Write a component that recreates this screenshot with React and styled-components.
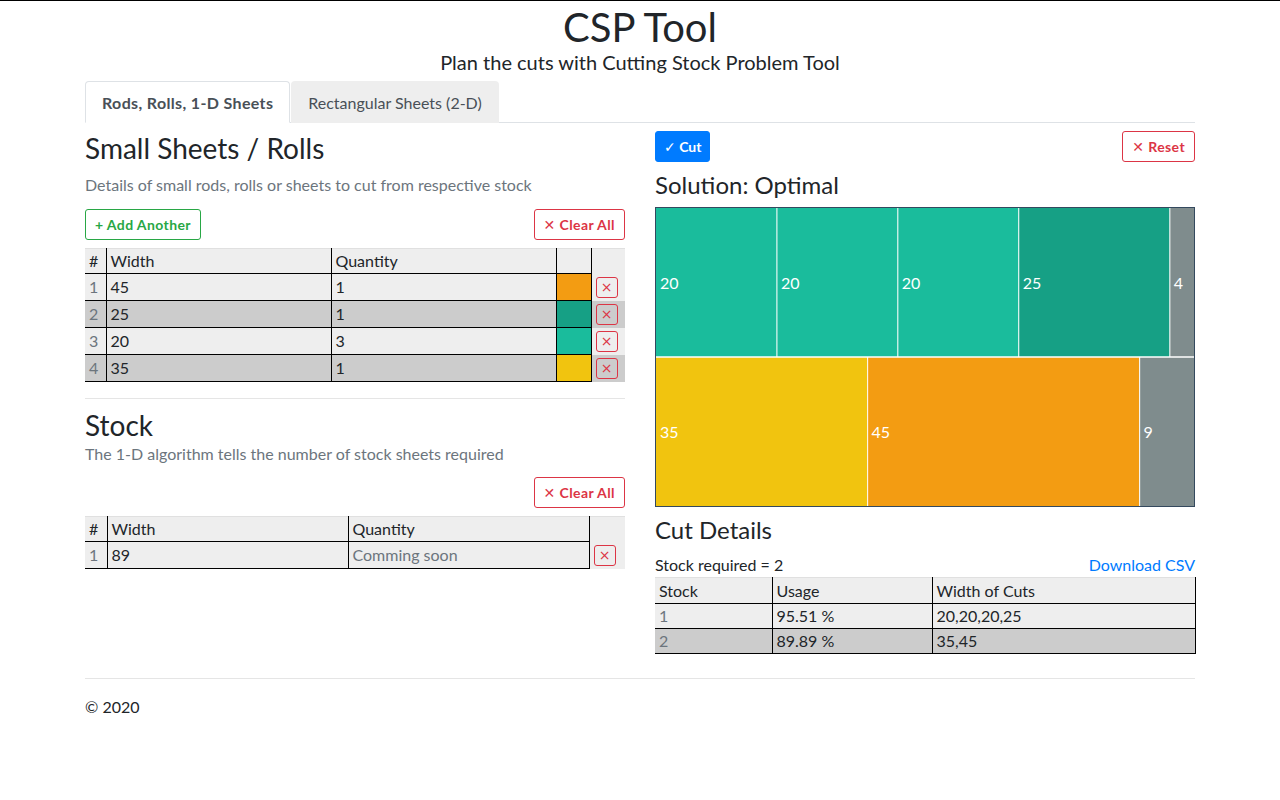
import React from 'react';
import styled, { createGlobalStyle, css } from 'styled-components';

const GlobalStyle = createGlobalStyle`
  html, body { margin: 0; padding: 0; background: #fff; }
  body {
    font-family: Lato, "Liberation Sans", "DejaVu Sans", sans-serif;
    font-size: 16px;
    line-height: 1.5;
    color: #212529;
    border-top: 1px solid #000;
  }
  *, *::before, *::after { box-sizing: border-box; }
`;

const Container = styled.div`
  width: 1140px;
  margin: 0 auto;
  padding: 0 15px;
`;

const Header = styled.header`
  text-align: center;
  padding-top: 6px;
`;

const Title = styled.h1`
  margin: 0;
  font-size: 40px;
  line-height: 40px;
  font-weight: 400;
`;

const Lead = styled.p`
  margin: 0 0 4px;
  font-size: 20px;
  line-height: 30px;
`;

const Tabs = styled.ul`
  display: flex;
  gap: 1px;
  list-style: none;
  margin: 0;
  padding: 0;
  border-bottom: 1px solid #dee2e6;
`;

const Tab = styled.li`
  margin-bottom: -1px;
  padding: 9px 16px 7px;
  line-height: 24px;
  color: #495057;
  border: 1px solid transparent;
  border-top-left-radius: 4px;
  border-top-right-radius: 4px;
  background: #eee;
  ${p => p.$active && css`
    background: #fff;
    font-weight: 700;
    letter-spacing: 0.35px;
    border-color: #dee2e6 #dee2e6 #fff;
  `}
`;

const Columns = styled.main`
  display: grid;
  grid-template-columns: 1fr 1fr;
  column-gap: 30px;
  padding-top: 8px;
  align-items: start;
`;

const Column = styled.section`
  display: flex;
  flex-direction: column;
  min-width: 0;
`;

const H3 = styled.h3`
  margin: 0 0 ${p => p.$mb || 0}px;
  font-size: 28px;
  line-height: 34px;
  font-weight: 400;
`;

const H4 = styled.h4`
  margin: 0 0 ${p => p.$mb || 8}px;
  font-size: 24px;
  line-height: 29px;
  font-weight: 400;
`;

const Muted = styled.p`
  margin: 0 0 ${p => p.$mb || 0}px;
  color: #6c757d;
  line-height: 24px;
`;

const Toolbar = styled.div`
  display: flex;
  justify-content: ${p => p.$justify || 'space-between'};
  align-items: center;
  margin-bottom: 8px;
`;

const Button = styled.button`
  font-family: inherit;
  font-size: 14px;
  line-height: 21px;
  font-weight: 700;
  letter-spacing: ${p => (p.$tight ? 0 : 0.4)}px;
  padding: 4px ${p => (p.$tight ? 8 : 9)}px;
  border-radius: 3px;
  border: 1px solid ${p => p.$color};
  background: ${p => (p.$solid ? p.$color : '#fff')};
  color: ${p => (p.$solid ? '#fff' : p.$color)};
  cursor: pointer;
`;

const DeleteButton = styled.button`
  display: flex;
  align-items: center;
  justify-content: center;
  width: 22px;
  height: 21px;
  padding: 0;
  font-family: "DejaVu Sans", sans-serif;
  font-size: 14px;
  line-height: 1;
  color: #dc3545;
  background: transparent;
  border: 1px solid #dc3545;
  border-radius: 3px;
`;

const Table = styled.table`
  width: 100%;
  border-collapse: collapse;
  table-layout: fixed;
`;

const Th = styled.th`
  text-align: left;
  font-weight: 400;
  background: #eee;
  padding: 0 4px;
  height: ${p => p.$h || 25}px;
  line-height: 24px;
  border-top: 1px solid #e0e0e0;
  border-bottom: 1px solid #000;
  border-right: 1px solid #000;
  ${p => p.$action && css`
    border-bottom-color: #eee;
    border-right: none;
  `}
`;

const Tr = styled.tr`
  background: ${p => (p.$even ? '#ccc' : '#eee')};
`;

const Td = styled.td`
  padding: 0 4px;
  height: ${p => p.$h || 27}px;
  line-height: 24px;
  border-bottom: 1px solid #000;
  border-right: 1px solid #000;
  color: ${p => (p.$muted ? '#6c757d' : '#212529')};
`;

const SwatchTd = styled.td`
  background: ${p => p.$color};
  border-bottom: 1px solid #000;
  border-right: 1px solid #000;
`;

const ActionTd = styled.td`
  padding: 0 4px;
  vertical-align: middle;
`;

const Divider = styled.hr`
  border: 0;
  border-top: 1px solid #e5e5e5;
  margin: ${p => p.$m || '16px 0'};
`;

const InfoRow = styled.div`
  display: flex;
  justify-content: space-between;
  line-height: 24px;
`;

const Link = styled.a`
  color: #007bff;
  text-decoration: none;
`;

const Footer = styled.footer`
  padding: 16px 0;
  line-height: 24px;
`;

const Chart = styled.svg`
  display: block;
  margin-bottom: 8px;
`;

const pieces = [
  { w: 45, q: 1, c: '#f39c12' },
  { w: 25, q: 1, c: '#16a085' },
  { w: 20, q: 3, c: '#1abc9c' },
  { w: 35, q: 1, c: '#f1c40f' },
];

const WASTE = '#7f8c8d';
const solution = [
  [{ w: 20, c: '#1abc9c' }, { w: 20, c: '#1abc9c' }, { w: 20, c: '#1abc9c' }, { w: 25, c: '#16a085' }, { w: 4, c: WASTE }],
  [{ w: 35, c: '#f1c40f' }, { w: 45, c: '#f39c12' }, { w: 9, c: WASTE }],
];

function CutChart() {
  const W = 540, H = 300, inner = 538, rowH = 149, scale = inner / 89;
  return (
    <Chart width={W} height={H} viewBox={`0 0 ${W} ${H}`}>
      {solution.map((row, ri) => {
        let x = 1;
        const y = 1 + ri * rowH;
        return (
          <g key={ri}>
            {row.map((s, si) => {
              const w = s.w * scale;
              const sx = x;
              x += w;
              return (
                <g key={si}>
                  <rect x={sx} y={y} width={w} height={rowH} fill={s.c} />
                  {si > 0 && <line x1={sx} y1={y} x2={sx} y2={y + rowH} stroke="#fff" strokeOpacity="0.85" strokeWidth="1.2" />}
                  <text x={sx + 4} y={y + rowH / 2 + 6} fill="#fff" fontSize="16" fontFamily="Lato, sans-serif">{s.w}</text>
                </g>
              );
            })}
          </g>
        );
      })}
      <line x1="1" y1="150" x2="539" y2="150" stroke="#fff" strokeWidth="1.5" />
      <rect x="0.5" y="0.5" width="539" height="299" fill="none" stroke="#34495e" />
    </Chart>
  );
}

export default function App() {
  return (
    <>
      <GlobalStyle />
      <Container>
        <Header>
          <Title>CSP Tool</Title>
          <Lead>Plan the cuts with Cutting Stock Problem Tool</Lead>
        </Header>
        <Tabs>
          <Tab $active>Rods, Rolls, 1-D Sheets</Tab>
          <Tab>Rectangular Sheets (2-D)</Tab>
        </Tabs>
        <Columns>
          <Column>
            <H3 $mb={8}>Small Sheets / Rolls</H3>
            <Muted $mb={12}>Details of small rods, rolls or sheets to cut from respective stock</Muted>
            <Toolbar>
              <Button $color="#28a745">+ Add Another</Button>
              <Button $color="#dc3545">✕ Clear All</Button>
            </Toolbar>
            <Table>
              <colgroup>
                <col style={{ width: 21 }} />
                <col style={{ width: 225 }} />
                <col style={{ width: 225 }} />
                <col style={{ width: 35 }} />
                <col style={{ width: 34 }} />
              </colgroup>
              <thead>
                <tr>
                  <Th>#</Th>
                  <Th>Width</Th>
                  <Th>Quantity</Th>
                  <Th />
                  <Th $action />
                </tr>
              </thead>
              <tbody>
                {pieces.map((p, i) => (
                  <Tr key={i} $even={i % 2 === 1}>
                    <Td $muted>{i + 1}</Td>
                    <Td>{p.w}</Td>
                    <Td>{p.q}</Td>
                    <SwatchTd $color={p.c} />
                    <ActionTd><DeleteButton>×</DeleteButton></ActionTd>
                  </Tr>
                ))}
              </tbody>
            </Table>
            <Divider $m="16px 0 9px" />
            <H3>Stock</H3>
            <Muted $mb={11}>The 1-D algorithm tells the number of stock sheets required</Muted>
            <Toolbar $justify="flex-end">
              <Button $color="#dc3545">✕ Clear All</Button>
            </Toolbar>
            <Table>
              <colgroup>
                <col style={{ width: 22 }} />
                <col style={{ width: 241 }} />
                <col style={{ width: 241 }} />
                <col style={{ width: 36 }} />
              </colgroup>
              <thead>
                <tr>
                  <Th>#</Th>
                  <Th>Width</Th>
                  <Th>Quantity</Th>
                  <Th $action />
                </tr>
              </thead>
              <tbody>
                <Tr>
                  <Td $muted>1</Td>
                  <Td>89</Td>
                  <Td $muted>Comming soon</Td>
                  <ActionTd><DeleteButton>×</DeleteButton></ActionTd>
                </Tr>
              </tbody>
            </Table>
          </Column>
          <Column>
            <Toolbar>
              <Button $color="#007bff" $solid $tight>✓ Cut</Button>
              <Button $color="#dc3545">✕ Reset</Button>
            </Toolbar>
            <H4>Solution: Optimal</H4>
            <CutChart />
            <H4 $mb={9}>Cut Details</H4>
            <InfoRow>
              <span>Stock required = 2</span>
              <Link href="#">Download CSV</Link>
            </InfoRow>
            <Table>
              <colgroup>
                <col style={{ width: 117 }} />
                <col style={{ width: 160 }} />
                <col style={{ width: 263 }} />
              </colgroup>
              <thead>
                <tr>
                  <Th $h={26}>Stock</Th>
                  <Th $h={26}>Usage</Th>
                  <Th $h={26}>Width of Cuts</Th>
                </tr>
              </thead>
              <tbody>
                <Tr>
                  <Td $muted $h={25}>1</Td>
                  <Td $h={25}>95.51 %</Td>
                  <Td $h={25}>20,20,20,25</Td>
                </Tr>
                <Tr $even>
                  <Td $muted $h={25}>2</Td>
                  <Td $h={25}>89.89 %</Td>
                  <Td $h={25}>35,45</Td>
                </Tr>
              </tbody>
            </Table>
          </Column>
        </Columns>
        <Divider $m="24px 0 0" />
        <Footer>© 2020</Footer>
      </Container>
    </>
  );
}
